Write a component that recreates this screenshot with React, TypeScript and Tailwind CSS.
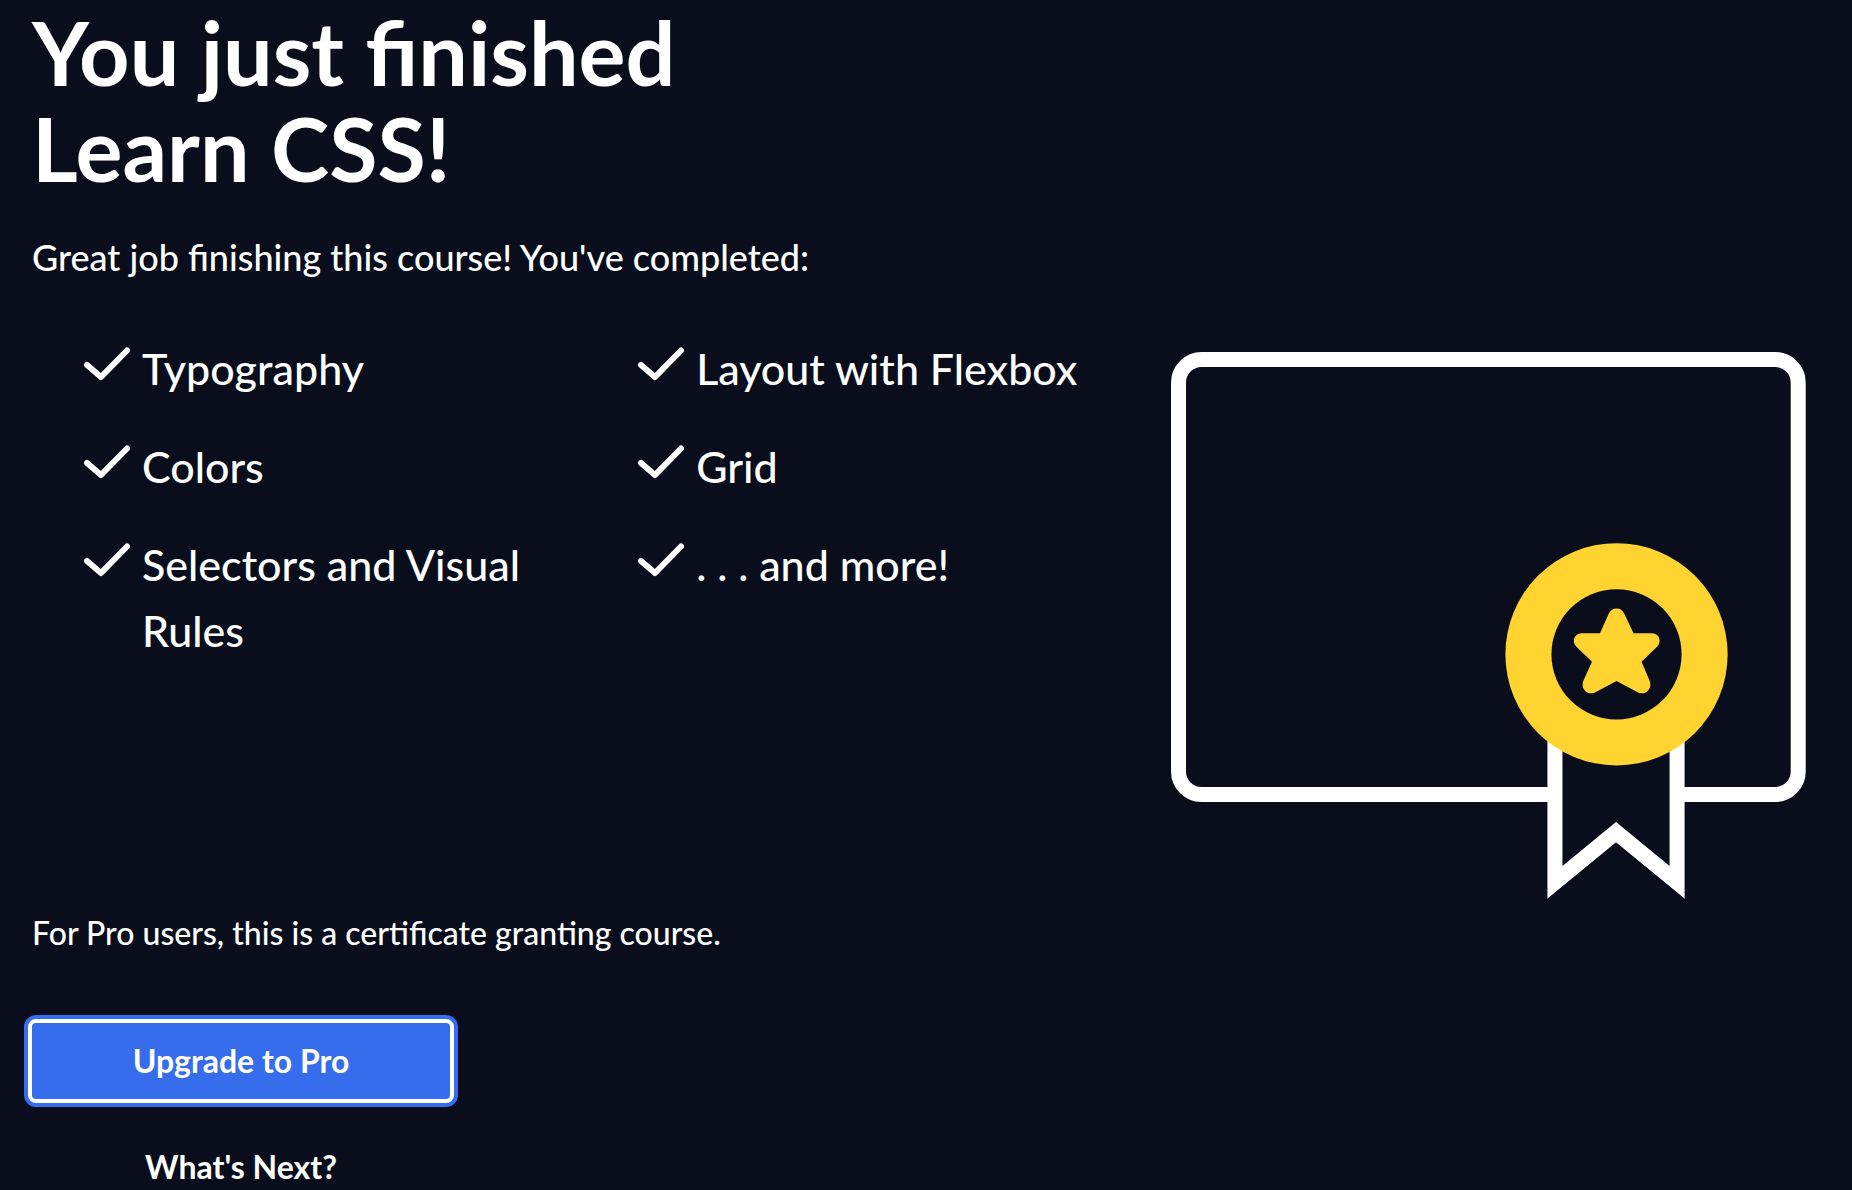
const topics = [
  'Typography',
  'Layout with Flexbox',
  'Colors',
  'Grid',
  'Selectors and Visual Rules',
  '. . . and more!',
];

function CheckIcon() {
  return (
    <svg
      viewBox="0 0 48 36"
      className="mt-[10px] h-9 w-12 shrink-0"
      fill="none"
      stroke="currentColor"
      strokeWidth="6"
      strokeLinecap="round"
      strokeLinejoin="round"
      aria-hidden="true"
    >
      <path d="M4 19 18 31 44 4.500" />
    </svg>
  );
}

function Certificate() {
  return (
    <svg viewBox="0 0 634 546" className="h-auto w-full" role="img" aria-label="Certificate">
      <rect x="7.5" y="7.5" width="619" height="434.5" rx="23" fill="none" stroke="#fff" strokeWidth="15" />
      <path d="M376 260V546L444.500 490 513 546V260Z" fill="#fff" />
      <path d="M391 260V513.500L444.500 469.500 498 513.500V260Z" fill="#0a0e1c" />
      <path d="M376 546 444.500 490 513 546Z" fill="#0a0e1c" />
      <circle cx="445" cy="302" r="111" fill="#ffd430" />
      <circle cx="445" cy="302" r="65" fill="#0a0e1c" />
      <path
        d="M437.200 261.500Q439.800 256.200 445 256.200T452.800 261.500L462 281H480.500C487.800 281 490.600 289.500 485.500 294.500L470 309.500 478 328C481.500 336.500 473.500 343.500 466.500 340L445 328.500 423.500 340C416.500 343.500 408.500 336.500 412 328L420.500 309.500 405 294.500C399.900 289.500 402.700 281 410 281H428.500Z"
        fill="#ffd430"
      />
    </svg>
  );
}

export default function App() {
  return (
    <main className="min-h-screen bg-[#0a0e1c] px-8 pt-1 font-['Lato',sans-serif] font-medium text-white">
      <h1 className="text-[88px] leading-[96px] font-bold">
        You just finished
        <br />
        Learn CSS!
      </h1>
      <p className="mt-[34px] text-[36px] leading-[54px]">
        Great job finishing this course! You've completed:
      </p>

      <section className="mt-[52px] flex items-start">
        <ul className="grid flex-1 grid-cols-2 gap-x-5 gap-y-8 pl-[51px] text-[43px] leading-[66px]">
          {topics.map((topic) => (
            <li key={topic} className="flex gap-[11px] pr-10">
              <CheckIcon />
              <span>{topic}</span>
            </li>
          ))}
        </ul>
        <div className="mt-4 mr-[14px] w-[35.500%] shrink-0">
          <Certificate />
        </div>
      </section>

      <p className="mt-[10px] text-[32px] leading-[48px]">
        For Pro users, this is a certificate granting course.
      </p>

      <div className="-mx-1 mt-[62px] flex w-[426px] flex-col items-center gap-10">
        <button
          type="button"
          className="h-[84px] w-full rounded-lg border-4 border-white bg-[#366dec] text-[32px] leading-[48px] font-bold ring-4 ring-[#366dec]"
        >
          Upgrade to Pro
        </button>
        <a href="#next" className="text-[32px] leading-[48px] font-bold">
          What's Next?
        </a>
      </div>
    </main>
  );
}
